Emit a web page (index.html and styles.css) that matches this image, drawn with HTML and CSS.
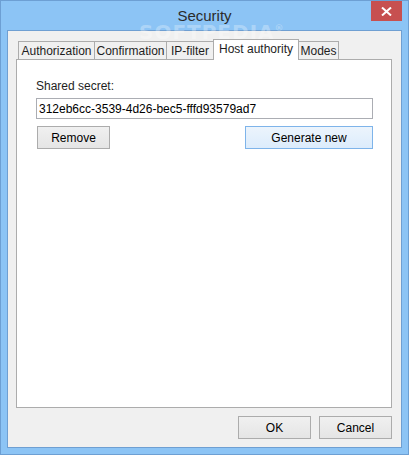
FILE: index.html
```html
<!DOCTYPE html>
<html lang="en">

<head>
    <meta charset="UTF-8">
    <title>Security</title>
    <link rel="stylesheet" href="styles.css">
</head>

<body>
    <div class="window">
        <div class="titlebar">
            <span class="title">Security</span>
            <div class="close-btn">
                <svg width="11" height="9" viewBox="0 0 11 9">
                    <path d="M1 0.5 L10 8.5 M10 0.5 L1 8.5" stroke="#fff" stroke-width="2" fill="none" />
                </svg>
            </div>
        </div>

        <div class="client">
            <div class="tabs">
                <div class="tab tab-auth">Authorization</div>
                <div class="tab tab-conf">Confirmation</div>
                <div class="tab tab-ip">IP-filter</div>
                <div class="tab tab-host active">Host authority</div>
                <div class="tab tab-modes">Modes</div>
            </div>

            <div class="panel">
                <label class="field-label">Shared secret:</label>
                <input class="secret-input" type="text" value="312eb6cc-3539-4d26-bec5-fffd93579ad7">
                <div class="panel-buttons">
                    <button class="btn btn-remove">Remove</button>
                    <button class="btn btn-generate">Generate new</button>
                </div>
            </div>

            <div class="footer">
                <button class="btn">OK</button>
                <button class="btn">Cancel</button>
            </div>
        </div>

        <!-- watermark -->
        <div class="watermark">SOFTPEDIA<sup>®</sup></div>
    </div>
</body>

</html>
```

FILE: styles.css
```css
body {
    margin: 0;
    font-family: "Liberation Sans", Arial, sans-serif;
    font-size: 12px;
    color: #000;
}

.window {
    position: relative;
    width: 409px;
    height: 455px;
    box-sizing: border-box;
    border: 1px solid #6d9fd3;
    background-color: #8cc4f5;
    padding: 0 6px 6px 6px;
    display: flex;
    flex-direction: column;
    overflow: hidden;
}

.titlebar {
    height: 29px;
    display: flex;
    align-items: center;
    justify-content: center;
}

.title {
    font-size: 15px;
    color: #2b2b2b;
    margin-top: -1px;
}

.close-btn {
    position: absolute;
    top: 0;
    right: 6px;
    width: 31px;
    height: 20px;
    background-color: #c75050;
    display: flex;
    align-items: center;
    justify-content: center;
}

.client {
    flex: 1;
    border: 1px solid #6f9fd2;
    background-color: #f0f0f0;
    display: flex;
    flex-direction: column;
    padding: 8px 9px 8px 8px;
}

.tabs {
    display: flex;
    align-items: flex-end;
    padding-left: 2px;
    margin-bottom: -1px;
    position: relative;
    z-index: 1;
}

.tab {
    box-sizing: border-box;
    height: 19px;
    border: 1px solid #acacac;
    background-color: #f0f0f0;
    margin-left: -1px;
    display: flex;
    align-items: center;
    justify-content: center;
    padding-top: 1px;
    white-space: nowrap;
    color: #1e1e1e;
}

.tab:first-child {
    margin-left: 0;
}

.tab-auth { width: 77px; }
.tab-conf { width: 73px; }
.tab-ip { width: 48px; }
.tab-host { width: 86px; }
.tab-modes { width: 41px; }

.tab.active {
    height: 21px;
    background-color: #fff;
    border-bottom: none;
    padding-top: 0;
    padding-bottom: 2px;
    position: relative;
    z-index: 2;
}

.panel {
    flex: 1;
    background-color: #fff;
    border: 1px solid #acacac;
    padding: 18px 17px 0 19px;
    display: flex;
    flex-direction: column;
}

.field-label {
    line-height: 16px;
    height: 16px;
    color: #1e1e1e;
}

.secret-input {
    margin-top: 4px;
    width: 337px;
    height: 21px;
    box-sizing: border-box;
    border: 1px solid #abadb3;
    padding: 0 2px;
    font-family: "Liberation Sans", Arial, sans-serif;
    font-size: 12px;
    color: #000;
    outline: none;
}

.panel-buttons {
    margin-top: 7px;
    width: 337px;
    display: flex;
    justify-content: space-between;
    padding-left: 1px;
    box-sizing: border-box;
}

.btn {
    width: 73px;
    height: 23px;
    box-sizing: border-box;
    border: 1px solid #acacac;
    background: linear-gradient(to bottom, #f0f0f0, #e5e5e5);
    font-family: "Liberation Sans", Arial, sans-serif;
    font-size: 12px;
    color: #000;
    padding: 0;
}

.btn-generate {
    width: 128px;
    border-color: #7eb4ea;
    background: linear-gradient(to bottom, #ecf4fc, #dcecfc);
}

.footer {
    margin-top: 8px;
    display: flex;
    justify-content: flex-end;
    gap: 8px;
}

.watermark {
    position: absolute;
    top: 24px;
    left: 138px;
    height: 15px;
    line-height: 15px;
    font-family: "DejaVu Sans", sans-serif;
    font-weight: bold;
    font-size: 20px;
    letter-spacing: 1px;
    color: rgba(255, 255, 255, 0.3);
    pointer-events: none;
    z-index: 5;
}

.watermark sup {
    font-size: 9px;
    line-height: 0;
}
```
